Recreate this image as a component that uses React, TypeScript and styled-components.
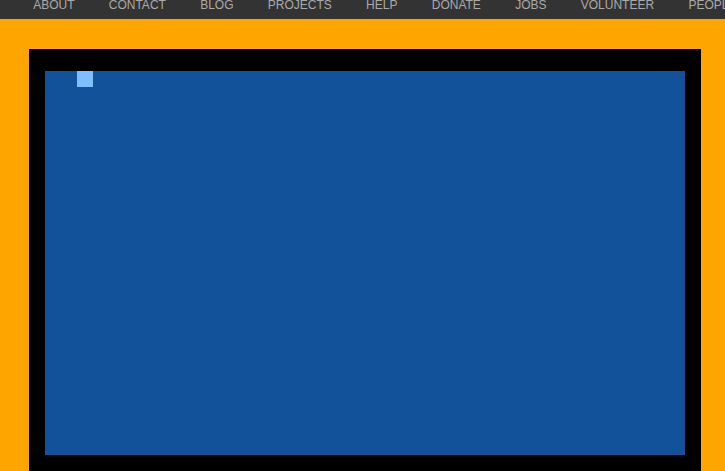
import React from 'react';
import styled, { createGlobalStyle } from 'styled-components';

const GlobalStyle = createGlobalStyle`
  html, body {
    margin: 0;
    padding: 0;
    background-color: #ffa500;
    overflow: hidden;
  }
`;

const NavBar = styled.nav`
  height: 19px;
  background-color: #333333;
  display: flex;
  padding-left: 16px;
  white-space: nowrap;
  overflow: hidden;
`;

const NavItem = styled.a`
  padding: 0 17.15px;
  font-family: "Liberation Sans", Arial, sans-serif;
  font-size: 12px;
  line-height: 10px;
  color: #aaaaaa;
  text-transform: uppercase;
  text-decoration: none;
  flex-shrink: 0;
`;

const Main = styled.main`
  padding: 30px 0 0 29px;
`;

const Frame = styled.div`
  display: inline-block;
  background-color: #000000;
  padding: 22px 16px 16px;
`;

const Canvas = styled.div`
  position: relative;
  width: 640px;
  height: 384px;
  background-color: #11529b;
`;

const Sprite = styled.div<{ $x: number; $y: number }>`
  position: absolute;
  left: ${p => p.$x}px;
  top: ${p => p.$y}px;
  width: 16px;
  height: 16px;
  background-color: #80bfff;
`;

const links = ['About', 'Contact', 'Blog', 'Projects', 'Help', 'Donate', 'Jobs', 'Volunteer', 'People'];

const App: React.FC = () => {
  return (
    <>
      <GlobalStyle />
      <NavBar>
        {links.map(link => (
          <NavItem key={link} href="#">
            {link}
          </NavItem>
        ))}
      </NavBar>
      <Main>
        <Frame>
          <Canvas>
            <Sprite $x={32} $y={0} />
          </Canvas>
        </Frame>
      </Main>
    </>
  );
};

export default App;
